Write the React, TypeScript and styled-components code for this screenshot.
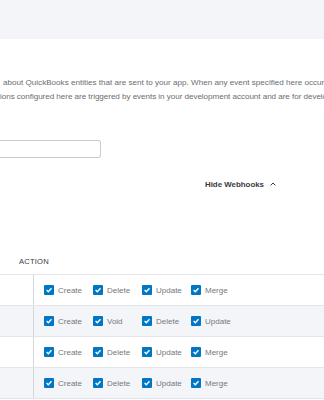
import styled, {createGlobalStyle} from "styled-components"

const GlobalStyle = createGlobalStyle`
    html, body{
        margin: 0;
        padding: 0;
        background: #fff;
        font-family: "Liberation Sans", Arial, sans-serif;
        overflow: hidden;
    }
`

const TopBand = styled.div`
    height: 39px;
    width: 100%;
    background: #f4f5f8;
`

const Intro = styled.div`
    padding-top: 37px;
    font-size: 8.1px;
    line-height: 14px;
    color: #6b6c72;
    white-space: nowrap;
    overflow: hidden;
    .line{
        height: 14px;
    }
    .first{
        padding-left: 3px;
    }
    .second{
        letter-spacing: -0.05px;
    }
`

const FieldRow = styled.div`
    margin-top: 36px;
    height: 18px;
    display: flex;
    flex-direction: row;
    input{
        width: 101px;
        height: 18px;
        box-sizing: border-box;
        border: 1px solid #c9cbd0;
        border-left: none;
        border-radius: 0 3px 3px 0;
        outline: none;
        padding: 0;
        background: #fff;
    }
`

const ToggleRow = styled.div`
    margin-top: 18px;
    height: 16px;
    display: flex;
    flex-direction: row;
    justify-content: flex-end;
    align-items: center;
    padding-right: 48px;
    .label{
        font-size: 7.9px;
        font-weight: 700;
        color: #393a3d;
    }
    svg{
        margin-left: 6px;
    }
`

const TableHead = styled.div`
    margin-top: 57px;
    height: 25px;
    display: flex;
    flex-direction: row;
    align-items: center;
    padding-left: 19px;
    border-bottom: 1px solid #e3e5e8;
    font-size: 7.6px;
    color: #393a3d;
    letter-spacing: 0.2px;
`

const Row = styled.div<{$shade: boolean}>`
    height: 30px;
    display: flex;
    flex-direction: row;
    background: ${p => p.$shade ? "#f4f5f8" : "#fff"};
    border-bottom: 1px solid #e3e5e8;
    .name{
        width: 33px;
        border-right: 1px solid #d4d7dc;
    }
    .actions{
        display: flex;
        flex-direction: row;
        align-items: center;
        padding-left: 10px;
    }
`

const Action = styled.div`
    width: 49px;
    display: flex;
    flex-direction: row;
    align-items: center;
    font-size: 8px;
    color: #76777c;
    .box{
        width: 10px;
        height: 10px;
        border-radius: 1px;
        background: #0077c5;
        display: flex;
        align-items: center;
        justify-content: center;
        margin-right: 4px;
    }
`

const rows = [
    ["Create", "Delete", "Update", "Merge"],
    ["Create", "Void", "Delete", "Update"],
    ["Create", "Delete", "Update", "Merge"],
    ["Create", "Delete", "Update", "Merge"],
]

export default function App(){
    return (
        <>
            <GlobalStyle />
            <TopBand />

            <Intro>
                <div className="line first">
                    about QuickBooks entities that are sent to your app. When any event specified here occurs, your app is notified.
                </div>
                <div className="line second">
                    ions configured here are triggered by events in your development account and are for development purposes only.
                </div>
            </Intro>

            <FieldRow>
                <input type="text" />
            </FieldRow>

            <ToggleRow>
                <span className="label">Hide Webhooks</span>
                <svg width="6" height="4" viewBox="0 0 6 4">
                    <path d="M0.6 3.4 L3 1 L5.4 3.4" fill="none" stroke="#393a3d" strokeWidth="1" />
                </svg>
            </ToggleRow>

            <TableHead>ACTION</TableHead>

            {
                rows.map((list, i) => (
                    <Row key={i} $shade={i % 2 === 1}>
                        <div className="name"></div>
                        <div className="actions">
                            {
                                list.map((a) => (
                                    <Action key={a}>
                                        <div className="box">
                                            <svg width="8" height="8" viewBox="0 0 8 8">
                                                <path d="M1.6 4.1 L3.3 5.7 L6.5 2.3" fill="none" stroke="#fff" strokeWidth="1.4" />
                                            </svg>
                                        </div>
                                        {a}
                                    </Action>
                                ))
                            }
                        </div>
                    </Row>
                ))
            }
        </>
    )
}
